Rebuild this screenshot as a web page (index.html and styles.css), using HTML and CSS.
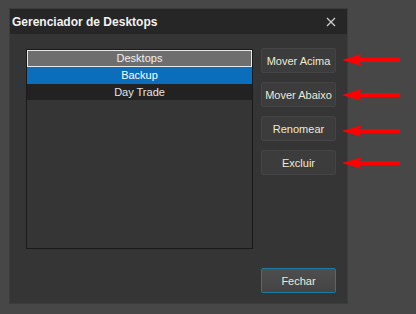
FILE: index.html
```html
<!DOCTYPE html>
<html lang="pt-BR">
<head>
  <meta charset="UTF-8" />
  <title>Gerenciador de Desktops</title>
  <link rel="stylesheet" href="styles.css">
</head>
<body>

<div class="dialog">
  <div class="titlebar">
    <span class="title">Gerenciador de Desktops</span>
    <svg class="close" width="10" height="10" viewBox="0 0 10 10">
      <path d="M1 1 L9 9 M9 1 L1 9" stroke="#d0d0d0" stroke-width="1.2" />
    </svg>
  </div>
  <div class="content">
    <div class="list">
      <div class="row row-head">Desktops</div>
      <div class="row row-sel">Backup</div>
      <div class="row">Day Trade</div>
    </div>
    <div class="actions">
      <button class="btn">Mover Acima</button>
      <button class="btn">Mover Abaixo</button>
      <button class="btn">Renomear</button>
      <button class="btn">Excluir</button>
      <button class="btn btn-close">Fechar</button>
    </div>
  </div>
</div>

<!-- annotation arrows -->
<svg class="arrows" width="416" height="314" viewBox="0 0 416 314">
  <g fill="#ff0000">
    <polygon points="342,60 362,54 359,58 400,58 400,62 359,62 362,66" />
    <polygon points="342,95 362,89 359,93 400,93 400,97 359,97 362,101" />
    <polygon points="342,131 362,125 359,129 400,129 400,133 359,133 362,137" />
    <polygon points="342,163 362,157 359,161 400,161 400,165 359,165 362,169" />
  </g>
</svg>

</body>
</html>
```

FILE: styles.css
```css
body {
  margin: 0;
  background: #474747;
  font-family: 'Liberation Sans', Arial, sans-serif;
  font-size: 11px;
  width: 416px;
  height: 314px;
  overflow: hidden;
  position: relative;
}
.dialog {
  margin: 8px 0 0 9px;
  width: 339px;
  height: 296px;
  background: #353535;
  border: 1px solid #3c3c3c;
  box-sizing: border-box;
  display: flex;
  flex-direction: column;
}
.titlebar {
  height: 25px;
  background: #262626;
  display: flex;
  align-items: center;
  justify-content: space-between;
  padding: 0 11px 0 2px;
  flex-shrink: 0;
}
.title {
  color: #f2f2f2;
  font-weight: bold;
  font-size: 12px;
}
.close {
  display: block;
}
.content {
  flex: 1;
  display: flex;
  gap: 8px;
  padding: 15px 0 10px 16px;
}
.list {
  width: 227px;
  height: 200px;
  border: 1px solid #1a1a1a;
  box-sizing: border-box;
  padding: 0;
}
.row {
  height: 16px;
  line-height: 16px;
  text-align: center;
  color: #e6e6e6;
  background: #222222;
}
.row-head {
  height: 17px;
  line-height: 15px;
  background: #6e6e6e;
  border: 1px solid #e8e8e8;
  box-sizing: border-box;
  color: #f0f0f0;
}
.row-sel {
  height: 17px;
  line-height: 17px;
  background: #0a6ebd;
  color: #ffffff;
}
.actions {
  width: 75px;
  display: flex;
  flex-direction: column;
  gap: 9px;
  margin-top: -1px;
}
.btn {
  width: 75px;
  height: 25px;
  padding: 0;
  background: #3c3c3c;
  border: 1px solid #444444;
  border-radius: 2px;
  color: #ecead6;
  font-family: 'Liberation Sans', Arial, sans-serif;
  font-size: 11px;
}
.btn-close {
  margin-top: auto;
  background: linear-gradient(#4e4e4e, #444444);
  border: 1px solid #1b7aa6;
}
.arrows {
  position: absolute;
  left: 0;
  top: 0;
}
```
